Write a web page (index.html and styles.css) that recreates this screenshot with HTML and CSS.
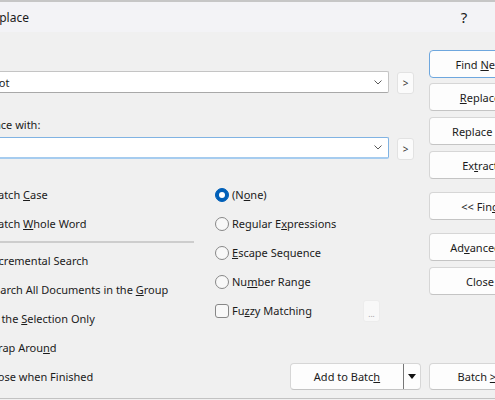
FILE: index.html
```html
<!DOCTYPE html>
<html lang="en">
<head>
    <meta charset="UTF-8">
    <title>Replace</title>
    <link rel="stylesheet" href="styles.css">
</head>
<body>
    <div class="window">
        <div class="titlebar">
            <span class="title">Replace</span>
            <span class="help">?</span>
        </div>
        <div class="content">
            <div class="main">
                <div class="field-label">Find:</div>
                <div class="combo-row">
                    <div class="combo">
                        <span class="combo-text">parrot</span>
                        <svg class="chevron" width="8" height="5" viewBox="0 0 8 5"><polyline points="0.5,0.5 4,4 7.5,0.5" fill="none" stroke="#5a5a5a" stroke-width="1"/></svg>
                    </div>
                    <button class="small-btn">&gt;</button>
                </div>
                <div class="field-label second">Replace with:</div>
                <div class="combo-row">
                    <div class="combo focused">
                        <span class="combo-text"></span>
                        <svg class="chevron" width="8" height="5" viewBox="0 0 8 5"><polyline points="0.5,0.5 4,4 7.5,0.5" fill="none" stroke="#5a5a5a" stroke-width="1"/></svg>
                    </div>
                    <button class="small-btn">&gt;</button>
                </div>

                <div class="options">
                    <div class="checks">
                        <div class="row"><span class="box"></span><span>Match <u>C</u>ase</span></div>
                        <div class="row"><span class="box"></span><span>Match <u>W</u>hole Word</span></div>
                        <div class="sep"></div>
                        <div class="row"><span class="box"></span><span><u>I</u>ncremental Search</span></div>
                        <div class="row"><span class="box"></span><span>Search All Documents in the <u>G</u>roup</span></div>
                        <div class="row"><span class="box"></span><span>In the <u>S</u>election Only</span></div>
                        <div class="row"><span class="box"></span><span>Wrap Arou<u>n</u>d</span></div>
                        <div class="row"><span class="box"></span><span>Close when Finished</span></div>
                    </div>
                    <div class="radios">
                        <div class="row"><span class="radio checked"></span><span>(N<u>o</u>ne)</span></div>
                        <div class="row"><span class="radio"></span><span>Regular E<u>x</u>pressions</span></div>
                        <div class="row"><span class="radio"></span><span><u>E</u>scape Sequence</span></div>
                        <div class="row"><span class="radio"></span><span>Nu<u>m</u>ber Range</span></div>
                        <div class="row fuzzy"><span class="box visible"></span><span>Fu<u>z</u>zy Matching</span><button class="dots">...</button></div>
                        <div class="split">
                            <button class="split-main">Add to Batc<u>h</u></button>
                            <button class="split-arrow"><span class="tri"></span></button>
                        </div>
                    </div>
                </div>
            </div>

            <div class="buttons">
                <button class="btn default">Find <u>N</u>ext</button>
                <button class="btn gap5"><u>R</u>eplace</button>
                <button class="btn gap6">Replace <u>A</u>ll</button>
                <button class="btn gap6">Ex<u>t</u>ract</button>
                <button class="btn gap13">&lt;&lt; Fin<u>d</u></button>
                <button class="btn gap13">Ad<u>v</u>anced...</button>
                <button class="btn gap6">Close</button>
                <button class="btn batch">Batch <u>&gt;</u>&gt;</button>
            </div>
        </div>
    </div>
</body>
</html>
```

FILE: styles.css
```css
* {
    box-sizing: border-box;
}

html, body {
    margin: 0;
    padding: 0;
}

body {
    background-color: #f0f0f0;
    overflow: hidden;
    font-family: "Noto Sans", "Open Sans", sans-serif;
    font-size: 11px;
    color: #1b1b1b;
}

button {
    font-family: inherit;
    font-size: 11px;
    color: #1b1b1b;
    padding: 0;
    cursor: default;
}

.window {
    width: 600px;
    height: 400px;
    margin-left: -30px;
    border-top: 2px solid #c6c6c6;
}

.titlebar {
    height: 30px;
    background-color: #f3f3f6;
    display: flex;
    align-items: center;
    padding-left: 15px;
    font-size: 12px;
}

.title {
    flex: 1;
}

.help {
    width: 30px;
    text-align: center;
    font-size: 15px;
    margin-right: 91px;
}

.content {
    display: flex;
    gap: 8px;
    padding-top: 18px;
    height: 367px;
    border-bottom: 1px solid #c2c2c2;
}

.main {
    width: 451px;
    flex: none;
}

.field-label {
    height: 16px;
    line-height: 16px;
    margin-bottom: 5px;
    padding-left: 2px;
}

.field-label.second {
    margin-top: 24px;
    margin-bottom: 4px;
}

.combo-row {
    display: flex;
    gap: 8px;
    align-items: flex-start;
    height: 22px;
}

.combo {
    width: 419px;
    height: 22px;
    background-color: #fff;
    border: 1px solid #c4c4c4;
    border-bottom-color: #a8a8a8;
    border-radius: 2px;
    display: flex;
    align-items: center;
    padding: 0 6px 0 6px;
}

.combo.focused {
    border-color: #80b3e3;
    border-bottom: 2px solid #a6ccef;
}

.combo-text {
    flex: 1;
}

.small-btn {
    width: 17px;
    height: 22px;
    margin-top: 1px;
    background-color: #fbfbfb;
    border: 1px solid #e2e2e2;
    border-radius: 3px;
    font-size: 10px;
    color: #333;
}

.options {
    display: flex;
    gap: 21px;
    margin-top: 21px;
}

.checks {
    width: 224px;
    flex: none;
}

.radios {
    width: 206px;
    flex: none;
}

.row {
    height: 29px;
    display: flex;
    align-items: center;
    white-space: nowrap;
}

.box {
    width: 14px;
    height: 14px;
    border: 1px solid #878787;
    border-radius: 3px;
    background-color: #f8f8f8;
    margin-right: 4px;
    flex: none;
}

.box.visible {
    margin-right: 3px;
}

.sep {
    height: 2px;
    margin: 3px 0;
    background-color: #cdcdcd;
}

.radio {
    width: 14px;
    height: 14px;
    border: 1px solid #878787;
    border-radius: 50%;
    background-color: #f8f8f8;
    margin-right: 3px;
    flex: none;
    display: flex;
    align-items: center;
    justify-content: center;
}

.radio.checked {
    background-color: #005fb8;
    border-color: #005fb8;
}

.radio.checked::after {
    content: "";
    width: 6px;
    height: 6px;
    border-radius: 50%;
    background-color: #fff;
}

.fuzzy {
    width: 165px;
}

.dots {
    margin-left: auto;
    flex: none;
    width: 17px;
    height: 22px;
    background-color: #f8f8f8;
    border: 1px solid #ececec;
    border-radius: 3px;
    font-size: 8px;
    color: #9a9a9a;
    padding-top: 6px;
}

.split {
    display: flex;
    margin-top: 38px;
    margin-left: 75px;
    width: 131px;
    height: 27px;
    background-color: #fdfdfd;
    border: 1px solid #d6d6d6;
    border-bottom-color: #c4c4c4;
    border-radius: 4px;
}

.split-main {
    width: 113px;
    border: none;
    border-right: 1px solid #777;
    background: none;
}

.split-arrow {
    flex: 1;
    border: none;
    background: none;
    display: flex;
    align-items: center;
    justify-content: center;
}

.tri {
    width: 0;
    height: 0;
    border-left: 4px solid transparent;
    border-right: 4px solid transparent;
    border-top: 5px solid #111;
}

.buttons {
    width: 102px;
    flex: none;
    display: flex;
    flex-direction: column;
}

.btn {
    height: 28px;
    flex: none;
    background-color: #fdfdfd;
    border: 1px solid #d6d6d6;
    border-bottom-color: #c4c4c4;
    border-radius: 4px;
    text-align: center;
}

.btn.default {
    border-color: #6ea7de;
}

.gap5 {
    margin-top: 5px;
}

.gap6 {
    margin-top: 6px;
}

.gap13 {
    margin-top: 13px;
}

.batch {
    margin-top: 68px;
    height: 27px;
}
```
